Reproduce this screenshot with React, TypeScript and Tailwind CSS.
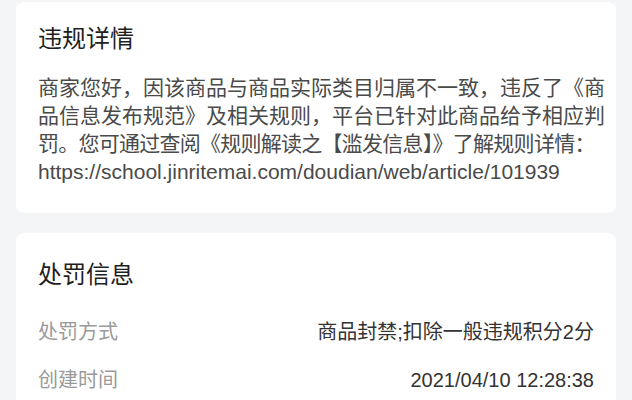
const font = "font-['Liberation_Sans','Noto_Sans_CJK_SC',sans-serif]";

function InfoRow({ label, value }: { label: string; value: string }) {
  return (
    <div className="flex items-center justify-between h-[28px]">
      <span className="text-[20px] leading-[28px] text-[#9a9a9a]">{label}</span>
      <span className="text-[20px] leading-[28px] text-[#333333]">{value}</span>
    </div>
  );
}

export default function App() {
  const justified = "block whitespace-nowrap [text-align-last:justify]";

  return (
    <div className={`${font} w-[632px] h-[400px] overflow-hidden bg-[#f4f5f7] pt-[2px]`}>
      <section className="mx-4 rounded-lg bg-white px-[22px] pt-[21px] pb-[27px]">
        <h2 className="text-[24px] leading-[32px] font-normal text-[#1f1f1f]">违规详情</h2>
        <div className="mt-[19px] text-[21px] leading-[28px] text-[#4a4a4a]">
          <span className={justified}>商家您好，因该商品与商品实际类目归属不一致，违反了《商</span>
          <span className={justified}>品信息发布规范》及相关规则，平台已针对此商品给予相应判</span>
          <span className={`${justified} tracking-[-1.4px]`}>罚。您可通过查阅《规则解读之【滥发信息】》了解规则详情：</span>
          <span className="block whitespace-nowrap">https://school.jinritemai.com/doudian/web/article/101939</span>
        </div>
      </section>

      <section className="mx-4 mt-5 rounded-lg bg-white px-[22px] pt-[26px] pb-8">
        <h2 className="text-[24px] leading-[32px] font-normal text-[#1f1f1f]">处罚信息</h2>
        <div className="mt-[27px] flex flex-col gap-5">
          <InfoRow label="处罚方式" value="商品封禁;扣除一般违规积分2分" />
          <InfoRow label="创建时间" value="2021/04/10 12:28:38" />
        </div>
      </section>
    </div>
  );
}
